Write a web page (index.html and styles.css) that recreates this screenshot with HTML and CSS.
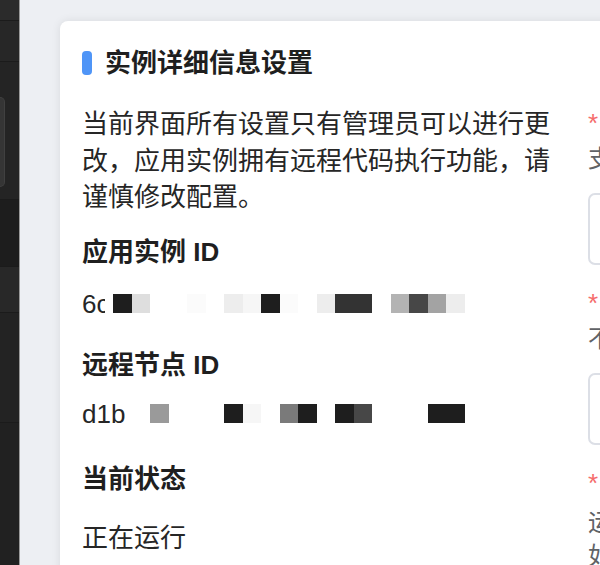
FILE: index.html
```html
<!DOCTYPE html>
<html lang="zh-CN">
<head>
<meta charset="utf-8">
<title>实例详细信息设置</title>
<link rel="stylesheet" href="styles.css">
</head>
<body>
<div class="app">
  <aside class="sidebar">
    <div class="sb-band b1"></div>
    <div class="sb-band b2"></div>
    <div class="sb-band b3"><div class="sb-item"></div></div>
    <div class="sb-band b4"></div>
    <div class="sb-band b5"></div>
    <div class="sb-band b6"></div>
    <div class="sb-band b7"></div>
  </aside>
  <main class="main">
    <section class="card">
      <h2 class="card-title"><span class="bar"></span>实例详细信息设置</h2>
      <div class="cols">
        <div class="info">
          <p class="notice">当前界面所有设置只有管理员可以进行更改，应用实例拥有远程代码执行功能，请谨慎修改配置。</p>
          <dl class="facts">
            <dt class="first">应用实例 ID</dt>
            <dd class="id first-id">
              <span class="id-text cut">6c</span>
              <span class="mosaic">
                <i class="k"></i><i class="le"></i><i></i><i></i><i class="lx"></i><i></i><i class="lf"></i><i class="lw"></i><i class="k"></i><i class="lx"></i><i></i><i class="lf"></i><i class="d3"></i><i class="d3"></i><i></i><i class="gb"></i><i class="d4"></i><i class="ga"></i><i class="lf"></i>
              </span>
            </dd>
            <dt class="after-first">远程节点 ID</dt>
            <dd class="id">
              <span class="id-text">d1b</span>
              <span class="mosaic">
                <i></i><i></i><i class="g9"></i><i></i><i></i><i></i><i class="k"></i><i class="lw"></i><i></i><i class="g7"></i><i class="k"></i><i></i><i class="k"></i><i class="d4"></i><i></i><i></i><i></i><i class="k"></i><i class="k"></i>
              </span>
            </dd>
            <dt>当前状态</dt>
            <dd class="status">正在运行</dd>
          </dl>
        </div>
        <form class="form">
          <div class="field">
            <div class="label"><span class="req">*</span>实例名称</div>
            <div class="hint">支持中文、英文字母、数字和下划线</div>
            <div class="input"></div>
          </div>
          <div class="field">
            <div class="label"><span class="req">*</span>远程节点地址</div>
            <div class="hint">不能包含空格和特殊字符</div>
            <div class="input"></div>
          </div>
          <div class="field">
            <div class="label"><span class="req">*</span>启动命令</div>
            <div class="hint multi">运行实例时将在远程节点上执行此命令，<br>如需修改请先停止实例。</div>
          </div>
        </form>
      </div>
    </section>
  </main>
</div>
</body>
</html>
```
FILE: styles.css
```css
* { box-sizing: border-box; }
html, body {
  margin: 0;
  padding: 0;
  width: 600px;
  height: 565px;
  overflow: hidden;
}
body {
  font-family: "Liberation Sans", "Noto Sans CJK SC", sans-serif;
  color: #262626;
  background: #edeff3;
}
.app {
  display: flex;
  height: 565px;
}
.sidebar {
  width: 20px;
  flex: none;
  display: flex;
  flex-direction: column;
  background: #222;
  border-right: 1px solid #9a9a9a;
}
.sb-band { flex: none; border-bottom: 1px solid #1b1b1b; }
.b1 { height: 21px; background: #2b2b2b; }
.b2 { height: 41px; background: #272727; }
.b3 { height: 138px; background: #242424; padding-top: 35px; }
.sb-item {
  width: 5px;
  height: 90px;
  background: #353535;
  border-radius: 0 5px 5px 0;
  border: 1px solid #404040;
  border-left: none;
}
.b4 { height: 67px; background: #1d1d1d; }
.b5 { height: 46px; background: #282828; }
.b6 { height: 110px; background: #232323; }
.b7 { flex: 1; background: #212121; border-bottom: none; }

.main {
  flex: 1;
  min-width: 0;
  overflow: hidden;
  background: #edeff3;
  padding: 21px 0 0 40px;
}
.card {
  width: 1100px;
  height: 700px;
  background: #fff;
  border-radius: 8px;
  box-shadow: 0 0 10px rgba(0, 0, 0, 0.09);
  padding: 24px 22px;
}
.card-title {
  margin: 0 0 24px;
  display: flex;
  align-items: center;
  gap: 13px;
  font-size: 26px;
  line-height: 36px;
  font-weight: 700;
  color: #1f1f1f;
}
.bar {
  width: 10px;
  height: 24px;
  border-radius: 4px;
  background: #4f95f7;
}
.cols {
  display: flex;
  gap: 26px;
  align-items: flex-start;
}
.info {
  width: 480px;
  flex: none;
  font-size: 26px;
}
.notice {
  margin: 1px 0 0;
  line-height: 36.5px;
  color: #262626;
}
.facts { margin: 0; }
.facts dt {
  margin-top: 27.5px;
  font-weight: 700;
  line-height: 37px;
  color: #1f1f1f;
}
.facts dt.first { margin-top: 18px; }
.facts dt.after-first { margin-top: 24.5px; }
.facts dd {
  margin: 0;
  line-height: 37px;
  color: #262626;
}
.facts dd.id {
  margin-top: 12px;
  display: flex;
  align-items: baseline;
}
.facts dd.first-id { margin-top: 15px; }
.facts dd.status { margin-top: 22px; }
.id-text {
  width: 31px;
  flex: none;
  white-space: nowrap;
}
.id-text.cut {
  width: 23px;
  margin-right: 8px;
  overflow: hidden;
}
.mosaic {
  display: flex;
  height: 19px;
}
.mosaic i {
  width: 18.5px;
  height: 19px;
  flex: none;
}
.mosaic .k { background: #1e1e1e; }
.mosaic .d3 { background: #333; }
.mosaic .d4 { background: #474747; }
.mosaic .g7 { background: #7a7a7a; }
.mosaic .g9 { background: #9a9a9a; }
.mosaic .ga { background: #a3a3a3; }
.mosaic .gb { background: #b3b3b3; }
.mosaic .le { background: #dedede; }
.mosaic .lf { background: #ededed; }
.mosaic .lw { background: #f6f6f6; }
.mosaic .lx { background: #fbfbfb; }

.form {
  width: 480px;
  flex: none;
  margin: 0;
}
.field { margin-bottom: 20px; }
.label {
  font-size: 26px;
  line-height: 37px;
  color: #303133;
  white-space: nowrap;
}
.req {
  color: #f56c6c;
  margin-right: 7px;
}
.hint {
  font-size: 24px;
  line-height: 33px;
  color: #606266;
  white-space: nowrap;
}
.hint.multi { margin-top: 4px; }
.input {
  margin-top: 18px;
  height: 72px;
  border: 2px solid #dcdfe6;
  border-radius: 7px;
  background: #fff;
}
```
